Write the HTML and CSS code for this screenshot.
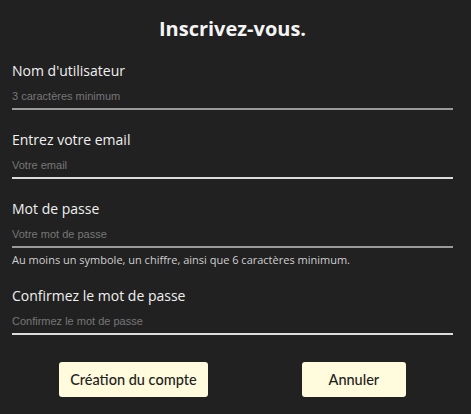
FILE: index.html
```html
<!DOCTYPE html>
<html lang="fr">
<head>
<meta charset="utf-8">
<title>Inscription</title>
<link rel="stylesheet" href="styles.css">
</head>
<body>
<form class="signup">
  <h1 class="title">Inscrivez-vous.</h1>
  <div class="field">
    <label class="label" for="user">Nom d'utilisateur</label>
    <input class="input input-dim" id="user" type="text" placeholder="3 caractères minimum">
  </div>
  <div class="field">
    <label class="label" for="email">Entrez votre email</label>
    <input class="input" id="email" type="email" placeholder="Votre email">
  </div>
  <div class="field field-hint">
    <label class="label" for="pwd">Mot de passe</label>
    <input class="input input-dim" id="pwd" type="password" placeholder="Votre mot de passe">
    <p class="hint">Au moins un symbole, un chiffre, ainsi que 6 caractères minimum.</p>
  </div>
  <div class="field">
    <label class="label" for="pwd2">Confirmez le mot de passe</label>
    <input class="input" id="pwd2" type="password" placeholder="Confirmez le mot de passe">
  </div>
  <div class="actions">
    <button class="btn" type="submit">Création du compte</button>
    <button class="btn" type="button">Annuler</button>
  </div>
</form>
</body>
</html>
```
FILE: styles.css
```css
html, body {
  margin: 0;
  padding: 0;
  background: #212121;
}
body {
  font-family: "Open Sans", "DejaVu Sans", sans-serif;
  color: #eeeeee;
}
.signup {
  margin: 0;
  padding: 15px 18px 0 12px;
  display: flex;
  flex-direction: column;
}
.title {
  margin: 0 0 18px 0;
  font-size: 20px;
  line-height: 28px;
  font-weight: 700;
  text-align: center;
  color: #f4f4f4;
}
.field {
  display: flex;
  flex-direction: column;
  margin-bottom: 20px;
}
.field-hint {
  margin-bottom: 18px;
}
.label {
  display: block;
  font-size: 14px;
  line-height: 20px;
  color: #f0f0f0;
}
.input {
  display: block;
  box-sizing: border-box;
  width: 100%;
  height: 29px;
  margin: 0;
  padding: 3px 0 0 0;
  border: 0;
  border-bottom: 2px solid #dcdcdc;
  background: transparent;
  outline: none;
  font-family: "Liberation Sans", Arial, sans-serif;
  font-size: 11px;
  color: #eeeeee;
}
.input-dim {
  border-bottom-color: #9a9a9a;
}
.input::placeholder {
  color: #777777;
  opacity: 1;
}
.hint {
  margin: 4px 0 0 0;
  font-size: 11px;
  line-height: 16px;
  color: #cfcfcf;
}
.actions {
  display: flex;
  justify-content: space-around;
  margin-top: 7px;
}
.btn {
  box-sizing: border-box;
  height: 35px;
  min-width: 104px;
  padding: 0 11px;
  border: 0;
  border-radius: 3px;
  background: #fffbdc;
  color: #222222;
  font-family: Lato, "Open Sans", sans-serif;
  font-size: 14.5px;
  font-weight: 500;
}
```
